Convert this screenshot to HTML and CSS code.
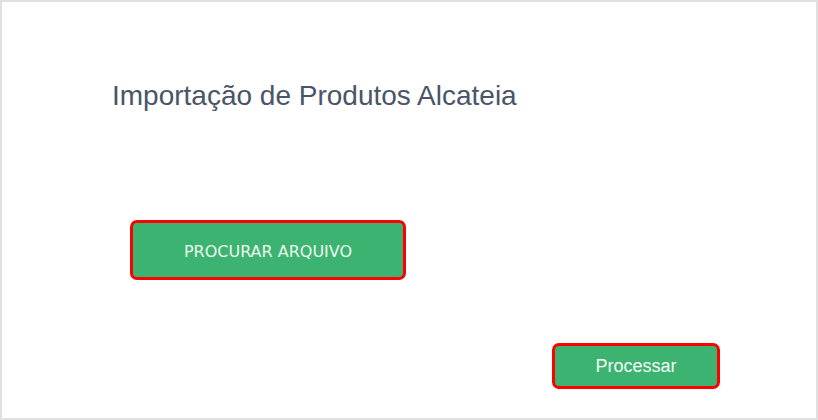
FILE: index.html
```html
<!DOCTYPE html>
<html lang="pt">
<head>
<meta charset="utf-8">
<link rel="stylesheet" href="styles.css">
</head>
<body>
<div class="frame">
  <h1 class="title">Importação de Produtos Alcateia</h1>
  <div class="upload-row">
    <button class="btn btn-upload">PROCURAR ARQUIVO</button>
  </div>
  <div class="action-row">
    <button class="btn btn-process">Processar</button>
  </div>
</div>
</body>
</html>
```
FILE: styles.css
```css
html, body {
  margin: 0;
  padding: 0;
  background: #ffffff;
}
.frame {
  box-sizing: border-box;
  width: 818px;
  height: 420px;
  border: 2px solid #e0e0e0;
  background: #ffffff;
  display: flex;
  flex-direction: column;
}
.title {
  margin: 79px 0 0 110px;
  font-family: "Liberation Sans", Arial, sans-serif;
  font-weight: normal;
  font-size: 28px;
  line-height: 30px;
  color: #4a5568;
}
.upload-row {
  margin: 109px 0 0 128px;
  display: flex;
}
.action-row {
  margin: 63px 0 0 550px;
  display: flex;
}
.btn {
  box-sizing: border-box;
  background: #3cb371;
  border: 3px solid #ff0000;
  border-radius: 7px;
  padding: 0;
  cursor: pointer;
}
.btn-upload {
  width: 276px;
  height: 60px;
  font-family: "DejaVu Sans", Verdana, sans-serif;
  font-size: 16px;
  color: #eaf7ee;
  padding-top: 2px;
}
.btn-process {
  width: 168px;
  height: 46px;
  font-family: "Liberation Sans", Arial, sans-serif;
  font-size: 18px;
  color: #f4fbf6;
}
```
